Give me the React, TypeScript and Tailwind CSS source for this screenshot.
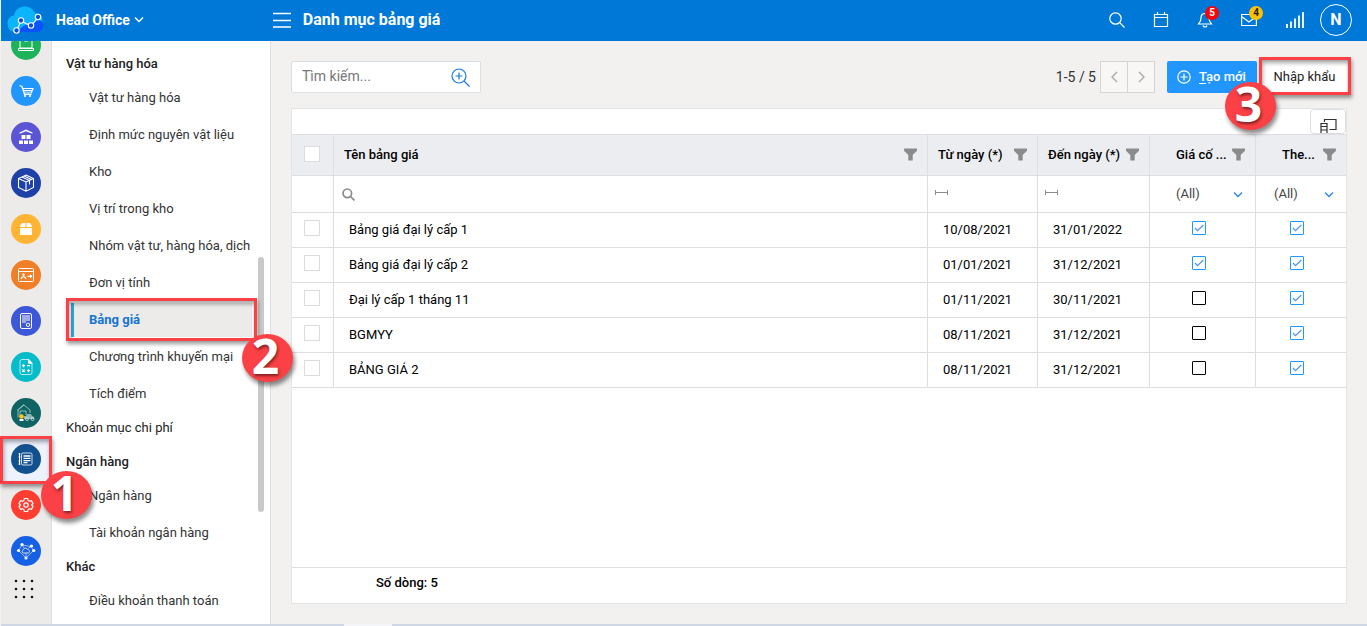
import type { ReactNode } from "react";

function Callout({ n, className }: { n: number; className: string }) {
  return (
    <span
      className={
        "pointer-events-none absolute z-30 flex h-12 w-[51px] items-center justify-center rounded-[50%] bg-[#fb4145] pr-1 pb-1 font-['Open_Sans',sans-serif] text-5xl leading-none font-bold text-white shadow-[2px_4px_4px_rgba(0,0,0,0.45)] [text-shadow:1px_2px_3px_rgba(0,0,0,0.5)] " +
        className
      }
    >
      {n}
    </span>
  );
}

function Frame({ className }: { className: string }) {
  return (
    <span
      className={
        "pointer-events-none absolute z-20 border-3 border-[#fb4145] shadow-[1px_3px_4px_rgba(0,0,0,0.4),inset_1px_3px_4px_rgba(0,0,0,0.35)] " +
        className
      }
    />
  );
}

function Logo() {
  return (
    <svg viewBox="0 0 38 28" className="h-7 w-[38px]" aria-hidden="true">
      <path
        d="M9 26C4 26 .5 22.500.5 17.500.5 13 3.500 10 7 9.500 8 4 12 .5 17.500.5c5 0 8.500 2.500 10.500 6.500 2-.5 5 .5 6.500 3 1.500 2.500 1 5 0 7L28 25Z"
        fill="#0bb4fb"
      />
      <path d="M11 26c2-3 4-6 8-7 3-1 6 0 8-2 2-3 6-4 8-1 3 4 1 9-4 10Z" fill="#0a55fb" />
      <path d="M9.500 24.500 14 15l10 5 7-8.500" fill="none" stroke="#fff" strokeWidth="1.100" />
      <g fill="#0a4de0" stroke="#fff" strokeWidth="1.100">
        <circle cx="9.500" cy="24.500" r="2.700" />
        <circle cx="14" cy="14.500" r="2.700" />
        <circle cx="24" cy="19.500" r="2.700" />
        <circle cx="31" cy="11" r="2.700" />
      </g>
    </svg>
  );
}

function Chevron({ className, d = "M1 1.500 5 5.500 9 1.500", box = "0 0 10 7" }: { className: string; d?: string; box?: string }) {
  return (
    <svg viewBox={box} className={className} fill="none" stroke="currentColor" strokeWidth="1.400" aria-hidden="true">
      <path d={d} />
    </svg>
  );
}

function Funnel() {
  return (
    <svg viewBox="0 0 13 13" className="mb-0.5 h-[13px] w-[13px] shrink-0" fill="#8b8b8b" aria-hidden="true">
      <path d="M0 .5h13v2.200L8.700 7v5.500H4.300V7L0 2.700Z" />
    </svg>
  );
}

type RailItem = { label: string; color: string; icon: ReactNode; active?: boolean };

const rail: RailItem[] = [
  {
    label: "Bán hàng",
    color: "bg-[#1db35b]",
    icon: (
      <g>
        <rect x="9" y="8" width="12" height="10" />
        <path d="M7.500 18.500h15v2h-15ZM13 11h4" />
      </g>
    ),
  },
  {
    label: "Mua hàng",
    color: "bg-[#2196ff]",
    icon: (
      <g>
        <path d="M8.500 9.500 11 10.500l2.500 8h7M12 12.500h10l-1.700 4.500h-7M12.500 14.700h8.500" strokeWidth="1.200" />
        <circle cx="14" cy="20" r="1.100" fill="#fff" stroke="none" />
        <circle cx="19" cy="20" r="1.100" fill="#fff" stroke="none" />
      </g>
    ),
  },
  {
    label: "Kho hàng",
    color: "bg-[#5a55d4]",
    icon: (
      <g fill="#fff" stroke="none">
        <path d="M15 7.500 21.500 10.500v1.300L15 9.300 8.500 11.800v-1.300Z" />
        <path d="M10.500 13h4v4h-4ZM15.500 13h4v4h-4ZM8 18.500h4v3.500H8ZM13 18.500h4v3.500h-4ZM18 18.500h4v3.500h-4Z" />
      </g>
    ),
  },
  {
    label: "Sản phẩm",
    color: "bg-[#1d41a6]",
    icon: (
      <path
        d="M15 7 22.500 10.500v9L15 23.200 7.500 19.500v-9ZM7.500 10.500 15 14l7.500-3.500M15 14v9M11 9l7.500 3.500v4M13 8l7.500 3.500"
        strokeWidth="1.100"
      />
    ),
  },
  {
    label: "Đóng gói",
    color: "bg-[#ffb433]",
    icon: (
      <g fill="#fff" stroke="none">
        <path d="M11 9h3.500v4H9.200v-1.500ZM15.500 9H19l1.800 2.500V13h-5.300Z" />
        <rect x="9" y="14" width="12" height="7" rx="1" />
      </g>
    ),
  },
  {
    label: "Nhân sự",
    color: "bg-[#f07f27]",
    icon: (
      <g>
        <rect x="7.500" y="8.500" width="15" height="13" rx="1" />
        <path d="M7.500 11.500h15" />
        <path d="M10 19c.5-2 1.500-2 2.500-2.500 1 .5 2 .5 2.500 2.500M12.500 13.500v3M11.300 14.500h2.400M16.500 16.300h4" strokeWidth="1.300" />
        <path d="m19 14.200 2.500 2.100-2.500 2.100Z" fill="#fff" stroke="none" />
      </g>
    ),
  },
  {
    label: "Hóa đơn",
    color: "bg-[#3c57d8]",
    icon: (
      <g>
        <rect x="9.500" y="7.500" width="11" height="15" rx="1.500" />
        <path d="M11 10h8M11 12h8M11 14h8M11 16h4" />
        <circle cx="17" cy="18.800" r="1.700" />
      </g>
    ),
  },
  {
    label: "Thuế",
    color: "bg-[#06bccb]",
    icon: (
      <g>
        <path d="M18 7.500h-7a2 2 0 0 0-2 2v11a2 2 0 0 0 2 2h8a2 2 0 0 0 2-2v-9.500Z" strokeWidth=".7" />
        <path d="m17.500 7.500 3.700 3.700h-3.700Z" fill="#fff" />
        <path d="M11 13.700h3M12.500 12.200v3M16 13.700h3M11.300 17.500l2.400 2.400M13.700 17.500l-2.400 2.400M16 18.700h3M17.500 17.200v3" strokeWidth="1.200" />
      </g>
    ),
  },
  {
    label: "Tài sản",
    color: "bg-[#0f6463]",
    icon: (
      <g strokeWidth=".8">
        <path d="M7 19.500V12l6-5 6 5v3M9 19v-6h6v4M6 12.500l7-6" stroke="#a8cfcb" />
        <path d="M15 18h-2v3h10v-2l-2-1-1-2h-4Z" fill="#8fb5b3" stroke="none" />
        <circle cx="16" cy="21" r="1.500" stroke="#d5e6e4" />
        <circle cx="21.500" cy="21" r="1.500" stroke="#d5e6e4" />
        <circle cx="10.500" cy="18.500" r="2.300" fill="#ffc21a" stroke="none" />
        <path d="M8.500 21h4v2h-4Z" fill="#fff" stroke="none" />
      </g>
    ),
  },
  {
    label: "Danh mục",
    color: "bg-[#12518f]",
    active: true,
    icon: (
      <g>
        <rect x="10.500" y="9" width="10.500" height="12" rx="1.500" strokeWidth=".8" />
        <path d="M12.500 12h7M12.500 14.300h7M12.500 16.600h7M12.500 18.700h4" strokeWidth="1.300" />
        <path d="M8.500 9v12M7.500 10h2M7.500 13h2M7.500 17h2M7.500 20h2" />
      </g>
    ),
  },
  {
    label: "Thiết lập",
    color: "bg-[#ff3d31]",
    icon: (
      <g strokeWidth="1.200">
        <path d="M13.300 8.500h3.400l.4 1.900 1.400.8 1.900-.6 1.600 2.900-1.400 1.500 1.400 1.500-1.600 2.900-1.900-.6-1.400.8-.4 1.900h-3.400l-.4-1.900-1.400-.8-1.900.6L8 16.500 9.400 15 8 13.500l1.600-2.900 1.900.6 1.400-.8Z" strokeLinejoin="round" />
        <circle cx="15" cy="15" r="2.200" />
      </g>
    ),
  },
  {
    label: "Kết nối",
    color: "bg-[#1560e4]",
    icon: (
      <g strokeWidth=".8">
        <path d="M7.500 14.500 11 9l9 1.500 2.500 4-7.500 7.500ZM11 9l2 3M20 10.500l-3 2M15 22v-5" stroke="#bcd2fb" />
        <path d="M12.500 17c-1.500 0-2-2-.5-2.700.2-2.300 3.500-3 4.500-.8 2-.3 3 3.500.5 3.500Z" />
        <g fill="#fff" stroke="none">
          <circle cx="7.500" cy="14.500" r="1.600" />
          <circle cx="11" cy="8.500" r="1.600" />
          <circle cx="20.500" cy="10" r="1.600" />
          <circle cx="22.800" cy="14.500" r="1.600" />
          <circle cx="15" cy="22" r="1.600" />
        </g>
      </g>
    ),
  },
];

type Entry = { title: string; strong?: boolean; items?: string[] };

const menu: Entry[] = [
  {
    title: "Vật tư hàng hóa",
    strong: true,
    items: [
      "Vật tư hàng hóa",
      "Định mức nguyên vật liệu",
      "Kho",
      "Vị trí trong kho",
      "Nhóm vật tư, hàng hóa, dịch",
      "Đơn vị tính",
      "Bảng giá",
      "Chương trình khuyến mại",
      "Tích điểm",
    ],
  },
  { title: "Khoản mục chi phí" },
  { title: "Ngân hàng", strong: true, items: ["Ngân hàng", "Tài khoản ngân hàng"] },
  { title: "Khác", strong: true, items: ["Điều khoản thanh toán"] },
];

const rows = [
  { name: "Bảng giá đại lý cấp 1", from: "10/08/2021", to: "31/01/2022", fixed: true, follow: true },
  { name: "Bảng giá đại lý cấp 2", from: "01/01/2021", to: "31/12/2021", fixed: true, follow: true },
  { name: "Đại lý cấp 1 tháng 11", from: "01/11/2021", to: "30/11/2021", fixed: false, follow: true },
  { name: "BGMYY", from: "08/11/2021", to: "31/12/2021", fixed: false, follow: true },
  { name: "BẢNG GIÁ 2", from: "08/11/2021", to: "31/12/2021", fixed: false, follow: true },
];

function SelectBox({ label }: { label: string }) {
  return (
    <input
      type="checkbox"
      aria-label={label}
      className="block h-4 w-4 appearance-none border border-[#dcdcdc] bg-white checked:bg-[#2196ff]"
    />
  );
}

function Tick({ label, checked }: { label: string; checked: boolean }) {
  return (
    <span className="grid justify-center pr-2 pb-1">
      <input
        type="checkbox"
        aria-label={label}
        defaultChecked={checked}
        className="peer col-start-1 row-start-1 h-3.5 w-3.5 appearance-none rounded-[1px] border border-black checked:border-[#2196ff]"
      />
      <svg
        viewBox="0 0 14 14"
        className="pointer-events-none invisible col-start-1 row-start-1 h-3.5 w-3.5 peer-checked:visible"
        fill="none"
        stroke="#4b94fb"
        strokeWidth="1.200"
        aria-hidden="true"
      >
        <path d="m3 7 2.500 2.700L11.300 4" />
      </svg>
    </span>
  );
}

function Head({ children, className = "pl-2.5" }: { children: ReactNode; className?: string }) {
  return (
    <th scope="col" className="border-r border-b border-[#dddee1] p-0 font-medium last:border-r-0">
      <span className={"flex items-center justify-between pr-2.5 whitespace-nowrap " + className}>
        {children}
        <Funnel />
      </span>
    </th>
  );
}

function AllFilter({ label, className }: { label: string; className: string }) {
  return (
    <span className={"grid items-center pr-3 " + className}>
      <select aria-label={label} className="col-start-1 row-start-1 w-full appearance-none bg-transparent text-[#444]">
        <option>(All)</option>
      </select>
      <Chevron className="pointer-events-none col-start-1 row-start-1 h-[7px] w-2.5 justify-self-end text-[#2f86f6]" />
    </span>
  );
}

function Range() {
  return (
    <svg viewBox="0 0 13 5" className="mb-1 ml-[7px] h-[5px] w-[13px]" stroke="#8b8b8b" aria-hidden="true">
      <path d="M.5 0v5M12.500 0v5M1 2.500h11" />
    </svg>
  );
}

const cell = "border-r border-b border-[#dddee1] p-0 last:border-r-0";

export default function App() {
  return (
    <div className="flex h-screen flex-col overflow-hidden bg-[#f2f1f0] pl-px font-[Roboto,sans-serif] text-[13px] text-[#222]">
      <header className="relative z-10 flex h-[41px] shrink-0 items-center bg-[#0078d7] pr-[15px] pb-0.5 pl-1.5 text-white">
        <Logo />
        <button type="button" className="ml-[11px] flex items-center gap-1 text-sm font-bold">
          Head Office
          <Chevron className="h-[7px] w-2.5" />
        </button>
        <button type="button" aria-label="Menu" className="ml-[129px]">
          <svg viewBox="0 0 18 16" className="h-4 w-[18px]" stroke="#fff" strokeWidth="1.500" aria-hidden="true">
            <path d="M0 1.500h18M0 8.500h18M0 15h18" />
          </svg>
        </button>
        <h1 className="ml-3 text-base font-bold">Danh mục bảng giá</h1>
        <div className="ml-auto flex items-center gap-7">
          <button type="button" aria-label="Tìm kiếm">
            <svg viewBox="0 0 16 16" className="h-4 w-4" fill="none" stroke="#fff" strokeWidth="1.200" aria-hidden="true">
              <circle cx="6.500" cy="6.500" r="5.700" />
              <path d="m10.700 10.700 4.800 4.800" />
            </svg>
          </button>
          <button type="button" aria-label="Lịch">
            <svg viewBox="0 0 16 16" className="h-4 w-4" fill="none" stroke="#fff" strokeWidth="1.200" aria-hidden="true">
              <path d="M1.500 2.500h13v12h-13ZM1.500 5.500h13M4.500 0v3M11.500 0v3" />
            </svg>
          </button>
          <button type="button" aria-label="Thông báo" className="relative">
            <svg viewBox="0 0 16 16" className="h-4 w-4" fill="none" stroke="#fff" strokeWidth="1.200" aria-hidden="true">
              <path d="M8 1.500c-3 0-4 2.500-4 4.500 0 3-1 4-2.500 6h13C13 10 12 9 12 6c0-2-1-4.500-4-4.500ZM6 13.500c.5 2 3.500 2 4 0" />
            </svg>
            <span className="absolute -top-1.5 left-2 flex h-3.5 w-3.5 items-center justify-center rounded-full bg-[#fb0207] text-[10px] font-bold">5</span>
          </button>
          <button type="button" aria-label="Thư" className="relative">
            <svg viewBox="0 0 16 16" className="h-4 w-4" fill="none" stroke="#fff" strokeWidth="1.200" aria-hidden="true">
              <path d="M.6 2.500h14.800v11H.6ZM.6 4.500 8 10l7.400-5.500" />
            </svg>
            <span className="absolute -top-1.5 left-2 flex h-3.5 w-3.5 items-center justify-center rounded-full bg-[#ffc107] text-[10px] font-bold text-[#222]">4</span>
          </button>
          <div className="ml-px flex items-center gap-4">
            <svg viewBox="0 0 18 16" className="h-4 w-[18px]" stroke="#fff" strokeWidth="1.800" role="img" aria-label="Tín hiệu">
              <path d="M1 16v-4M5 16v-6.500M9 16V6.500M13 16V3.500M17 16V0" />
            </svg>
            <button type="button" className="flex h-8 w-8 items-center justify-center rounded-full border border-white text-base font-bold">
              N
            </button>
          </div>
        </div>
      </header>

      <div className="flex min-h-0 flex-1">
        <nav aria-label="Phân hệ" className="relative z-[5] w-[50px] shrink-0 bg-[#ecebe9]">
          <ul className="-mt-[19px] flex flex-col">
            {rail.map((r) => (
              <li key={r.label} className={"relative flex h-[46px] items-center justify-center " + (r.active ? "bg-[#edf2fd]" : "")}>
                <button type="button" aria-label={r.label} className={"h-[30px] w-[30px] rounded-full " + r.color}>
                  <svg viewBox="0 0 30 30" className="h-[30px] w-[30px]" fill="none" stroke="#fff" aria-hidden="true">
                    {r.icon}
                  </svg>
                </button>
                {r.active && <Frame className="-inset-x-px top-0 -bottom-0.5" />}
                {r.active && <Callout n={1} className="top-[35px] left-10" />}
              </li>
            ))}
            <li className="flex justify-center pt-[5px] pr-1">
              <button type="button" aria-label="Tất cả ứng dụng">
                <svg viewBox="0 0 20 20" className="h-5 w-5" aria-hidden="true">
                  {[2, 10, 18].map((y) => [2, 10, 18].map((x) => <circle key={`${x}-${y}`} cx={x} cy={y} r="1.300" fill="#111" />))}
                </svg>
              </button>
            </li>
          </ul>
        </nav>

        <nav aria-label="Danh mục" className="relative z-[4] w-[220px] shrink-0 border-x border-[#dfdfdf] bg-white pt-[6px]">
          {menu.map((m) => (
            <section key={m.title}>
              <a href="#" className={"block pl-[14px] leading-[34px] " + (m.strong ? "font-medium" : "")}>
                {m.title}
              </a>
              {m.items && (
                <ul className="flex flex-col gap-[3px] pr-[18px] pl-[19px]">
                  {m.items.map((it) =>
                    it === "Bảng giá" ? (
                      <li key={it} className="relative">
                        <a href="#" aria-current="page" className="block border-l-3 border-[#2ba8dc] bg-[#ecebea] pl-[15px] leading-[34px] font-bold text-[#1474d4]">
                          {it}
                        </a>
                        <Frame className="-inset-x-[5px] -top-[5px] -bottom-1" />
                        <Callout n={2} className="top-[31px] -right-[41px]" />
                      </li>
                    ) : (
                      <li key={it}>
                        <a href="#" className="block pl-[18px] leading-[34px] whitespace-nowrap text-[#333]">
                          {it}
                        </a>
                      </li>
                    ),
                  )}
                </ul>
              )}
            </section>
          ))}
          <span className="absolute top-[216px] right-1.5 h-[255px] w-1.5 rounded-full bg-[#c9c9c9]" />
        </nav>

        <main className="flex min-w-0 flex-1 flex-col px-5 pt-5 pb-5">
          <div className="flex h-8 shrink-0 items-stretch">
            <label className="flex w-[190px] items-center rounded-xs border border-[#dcdfe2] bg-white pr-2.5 pl-2.5">
              <input type="search" aria-label="Tìm kiếm" placeholder="Tìm kiếm..." className="min-w-0 flex-1 pb-0.5 text-sm outline-none placeholder:text-[#777]" />
              <svg viewBox="0 0 19 19" className="h-[19px] w-[19px]" fill="none" stroke="#1a78dc" strokeWidth="1.200" aria-hidden="true">
                <circle cx="8" cy="8" r="7" />
                <path d="M8 4.500v7M4.500 8h7M13 13l5.500 5.500" />
              </svg>
            </label>
            <span className="ml-auto self-center text-sm text-[#333]">1-5 / 5</span>
            <div className="ml-1 flex w-[55px] divide-x divide-[#d4d4d4] border border-[#d4d4d4] bg-[#f8f7f6] text-[#aaa]">
              <button type="button" aria-label="Trang trước" className="flex flex-1 items-center justify-center">
                <Chevron className="h-3 w-[7px]" box="0 0 7 12" d="M6 1 1 6l5 5" />
              </button>
              <button type="button" aria-label="Trang sau" className="flex flex-1 items-center justify-center">
                <Chevron className="h-3 w-[7px]" box="0 0 7 12" d="m1 1 5 5-5 5" />
              </button>
            </div>
            <button type="button" className="ml-3 flex w-[90px] items-center gap-2 rounded-xs bg-[#2196ff] pl-2.5 font-medium whitespace-nowrap text-white">
              <svg viewBox="0 0 14 14" className="h-3.5 w-3.5 shrink-0" fill="none" stroke="#fff" strokeWidth="1.200" aria-hidden="true">
                <circle cx="7" cy="7" r="6.200" />
                <path d="M7 3.500v7M3.500 7h7" />
              </svg>
              <span>
                <u className="underline-offset-2">T</u>ạo mới
              </span>
            </button>
            <div className="relative ml-[5px] flex">
              <button type="button" className="w-[85px] bg-white whitespace-nowrap text-[#222]">
                Nhập khẩu
              </button>
              <Frame className="-top-1 -right-1 -bottom-0.5 -left-[3px]" />
              <Callout n={3} className="top-[21px] -left-[37px]" />
            </div>
          </div>

          <section className="mt-[15px] flex min-h-0 flex-1 flex-col border border-[#e3e4e5] bg-white">
            <div className="flex h-[26px] shrink-0 justify-end border-b border-[#dddee1]">
              <button type="button" aria-label="Chọn cột" className="flex w-9 items-end justify-center rounded-sm border border-[#dddee1]">
                <svg viewBox="0 0 17 15" className="h-[15px] w-[17px]" fill="none" stroke="#333" strokeWidth="1.200" aria-hidden="true">
                  <path d="M4.500 4V1.500h11.500v10H9.500M1 15V5.500h6V15M1 8.500h6M1 12h6" />
                </svg>
              </button>
            </div>
            <table className="w-full table-fixed border-separate border-spacing-0 text-left text-black">
              <colgroup>
                <col className="w-[42px]" />
                <col />
                <col className="w-[110px]" />
                <col className="w-[112px]" />
                <col className="w-[106px]" />
                <col className="w-[90px]" />
              </colgroup>
              <thead>
                <tr className="h-[41px] bg-[#ecedf1]">
                  <th className={cell + " pb-0.5 pl-3"}>
                    <SelectBox label="Chọn tất cả" />
                  </th>
                  <Head>Tên bảng giá</Head>
                  <Head>Từ ngày (*)</Head>
                  <Head>Đến ngày (*)</Head>
                  <Head className="pl-[26px]">Giá cố ...</Head>
                  <Head className="pl-[26px]">The...</Head>
                </tr>
                <tr className="h-[37px]">
                  <td className={cell} />
                  <td className={cell}>
                    <label className="flex items-center gap-2 pl-2">
                      <svg viewBox="0 0 13 13" className="h-[13px] w-[13px]" fill="none" stroke="#8b8b8b" strokeWidth="1.700" aria-hidden="true">
                        <circle cx="5.300" cy="5.300" r="4.300" />
                        <path d="m8.500 8.500 4 4" />
                      </svg>
                      <input type="text" aria-label="Lọc tên bảng giá" className="min-w-0 flex-1 outline-none" />
                    </label>
                  </td>
                  <td className={cell}>
                    <Range />
                  </td>
                  <td className={cell}>
                    <Range />
                  </td>
                  <td className={cell}>
                    <AllFilter label="Lọc giá cố định" className="pl-[26px]" />
                  </td>
                  <td className={cell}>
                    <AllFilter label="Lọc theo dõi" className="pl-[18px]" />
                  </td>
                </tr>
              </thead>
              <tbody>
                {rows.map((r) => (
                  <tr key={r.name} className="h-[35px]">
                    <td className={cell + " pb-1 pl-3"}>
                      <SelectBox label={"Chọn " + r.name} />
                    </td>
                    <td className={cell + " pl-[15px]"}>{r.name}</td>
                    <td className={cell + " pl-[15px]"}>{r.from}</td>
                    <td className={cell + " pl-[15px]"}>{r.to}</td>
                    <td className={cell}>
                      <Tick label={"Giá cố định: " + r.name} checked={r.fixed} />
                    </td>
                    <td className={cell}>
                      <Tick label={"Theo dõi: " + r.name} checked={r.follow} />
                    </td>
                  </tr>
                ))}
              </tbody>
            </table>
            <div className="mt-auto h-9 border-t border-[#dddee1] pl-[84px] leading-[30px] font-medium text-black">Số dòng: 5</div>
          </section>
        </main>
      </div>
      <footer className="flex h-0.5 shrink-0 bg-[#cfd6e4]">
        <span className="ml-[343px] w-12 bg-[#f4f5f8]" />
      </footer>
    </div>
  );
}
